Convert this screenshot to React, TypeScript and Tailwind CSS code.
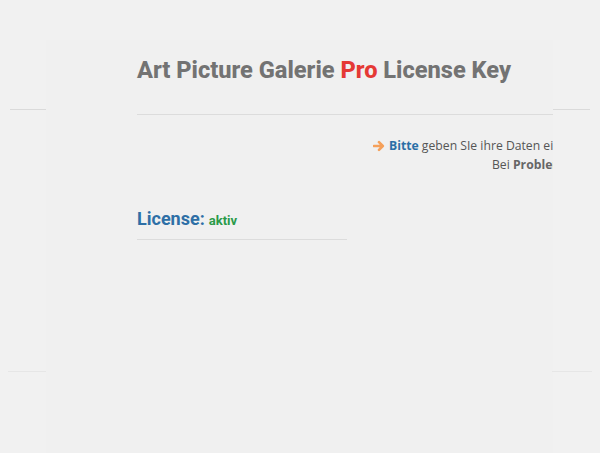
export default function App() {
  return (
    <div className="flex h-[453px] w-[600px] bg-[#f1f1f1] overflow-hidden" style={{ fontFamily: "Roboto, sans-serif" }}>
      <div className="w-[46px] shrink-0 flex flex-col pl-[10px] pt-[109px]">
        <div className="h-px w-[37px] bg-[#dadada]" />
        <div className="h-px w-[40px] -ml-[2px] mt-[261px] bg-[#e6e6e6]" />
      </div>
      <div className="w-[507px] shrink-0 mt-[40px] bg-[#f0f0f0] pl-[91px] overflow-hidden">
        <h1 className="mt-[14px] text-[23.6px] leading-[32px] font-extrabold text-[#737373] whitespace-nowrap">
          Art Picture Galerie <span className="text-[#e53935]">Pro</span> License Key
        </h1>
        <div className="mt-[28px] h-px w-[416px] bg-[#dcdcdc]" />
        <div className="mt-[21px] text-[12.2px] leading-[19px] text-[#555] whitespace-nowrap" style={{ fontFamily: '"Open Sans", sans-serif' }}>
          <div className="pl-[236px] flex items-center gap-[4px]">
            <svg width="12" height="12" viewBox="0 0 12 12" className="shrink-0">
              <path d="M1 6h8.5M6 2.2L9.8 6 6 9.8" fill="none" stroke="#f5a05a" strokeWidth="2.6" strokeLinecap="round" strokeLinejoin="round" />
            </svg>
            <span>
              <b className="text-[#2a6ea6]">Bitte</b> geben SIe ihre Daten ein um die Pro Version zu aktivieren.
            </span>
          </div>
          <div className="pl-[355px]">
            Bei <b className="text-[#666]">Problemen</b> wenden Sie sich bitte an den Support.
          </div>
        </div>
        <div className="mt-[33px] flex items-baseline gap-[4px] whitespace-nowrap">
          <span className="text-[18px] leading-[24px] font-bold text-[#2e6fa6]">License:</span>
          <span className="text-[13px] font-bold text-[#2a9a48]">aktiv</span>
        </div>
        <div className="mt-[8px] h-px w-[210px] bg-[#dcdcdc]" />
      </div>
      <div className="w-[47px] shrink-0 flex flex-col pt-[109px]">
        <div className="h-px w-[37px] bg-[#dadada]" />
        <div className="h-px w-[40px] -ml-[1px] mt-[261px] bg-[#e6e6e6]" />
      </div>
    </div>
  );
}
